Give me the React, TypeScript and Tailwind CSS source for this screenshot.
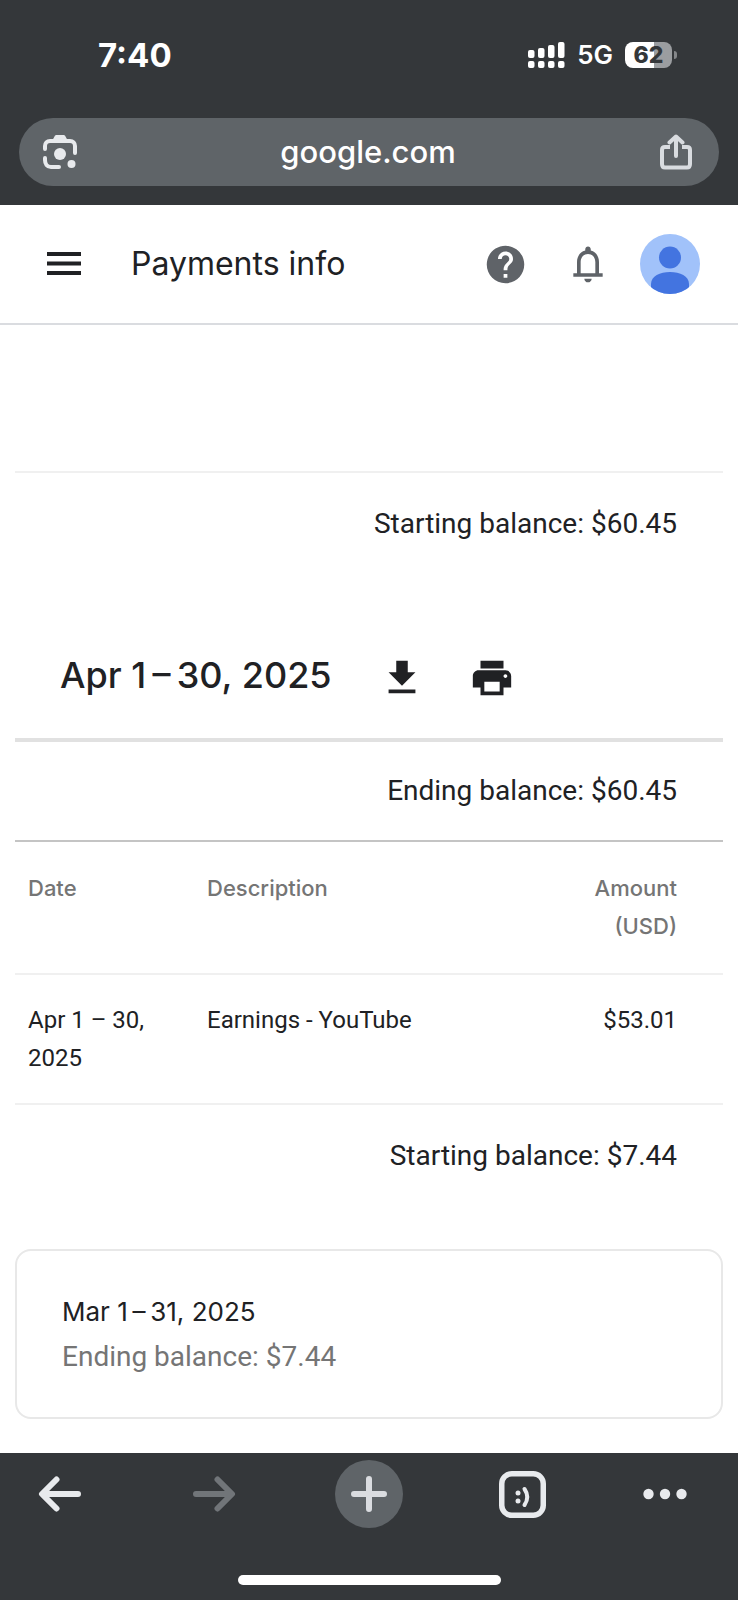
import type { ReactNode } from "react";

const TRANSACTIONS = [
  { date: "Apr 1 – 30, 2025", description: "Earnings - YouTube", amount: "$53.01" },
];

const SIGNAL_BARS = [
  { x: 0, top: 8 },
  { x: 10, top: 6 },
  { x: 20, top: 3 },
  { x: 30, top: 0 },
];

function StatusBar() {
  return (
    <div className="flex items-center justify-between pt-[35px] pb-[43px] pl-[98px] pr-[61px] text-white">
      <span className="text-[33px] leading-10 font-bold">7:40</span>
      <div className="flex items-center gap-3">
        <svg width="37" height="26" viewBox="0 0 37 26" fill="currentColor" aria-label="Signal">
          {SIGNAL_BARS.map((b) => (
            <g key={b.x}>
              <rect x={b.x} y={b.top} width="6.5" height={16 - b.top} rx="2" />
              <rect x={b.x} y="19" width="6.5" height="7" rx="2" />
            </g>
          ))}
        </svg>
        <span className="text-[26px] leading-8 font-semibold">5G</span>
        <div className="flex items-center gap-0.5">
          <div className="flex h-[26px] w-[47px] items-center justify-center rounded-lg bg-linear-to-r from-white from-62% to-[#9b9da0] to-62% text-[23px] font-extrabold text-[#34373a]">
            62
          </div>
          <span className="h-2 w-[3px] rounded-r-full bg-[#85878a]" />
        </div>
      </div>
    </div>
  );
}

function AddressBar() {
  return (
    <div className="mx-[19px] flex h-[68px] items-center justify-between rounded-full bg-[#5f6468] px-6 text-[#e8eaed]">
      <button aria-label="Search with camera">
        <svg width="34" height="34" viewBox="0 0 34 34" fill="none">
          <path d="M2 14V11C2 8 4 6 7 6H27C30 6 32 8 32 11V18" stroke="currentColor" strokeWidth="4" strokeLinecap="round" />
          <path d="M2 23V25C2 29 4 32 8 32H16" stroke="currentColor" strokeWidth="4" strokeLinecap="round" />
          <path d="M9 6L11.5 1.5C12 .5 12.500 0 13.500 0H20.500C21.500 0 22 .5 22.500 1.500L25 6Z" fill="currentColor" />
          <circle cx="17" cy="19" r="6" fill="currentColor" />
          <circle cx="28.500" cy="29" r="4" fill="currentColor" />
        </svg>
      </button>
      <span className="text-[31px] leading-10 font-medium text-white">google.com</span>
      <button aria-label="Share" className="pr-0.5 text-[#d9dce0]">
        <svg width="34" height="36" viewBox="0 0 34 36" fill="none" stroke="currentColor" strokeWidth="4">
          <path d="M11 13H6C4 13 3 14 3 16V30C3 32 4 33.500 6 33.500H28C30 33.500 31 32 31 30V16C31 14 30 13 28 13H23" strokeLinecap="butt" />
          <path d="M17 22V3M10.500 8.500L17 2.500L23.500 8.500" strokeLinecap="round" strokeLinejoin="round" />
        </svg>
      </button>
    </div>
  );
}

function AppHeader() {
  return (
    <header className="flex h-30 items-center border-b-2 border-[#dadce0] pl-[47px] pr-[38px]">
      <button aria-label="Main menu">
        <svg width="34" height="24" viewBox="0 0 34 24" fill="#202124">
          <path d="M0 0H34V4H0ZM0 9.500H34V13.500H0ZM0 19H34V23H0Z" />
        </svg>
      </button>
      <h1 className="ml-[50px] grow text-[32px] leading-10 text-[#202124]">Payments info</h1>
      <div className="flex items-center text-[#5f6368]">
        <button aria-label="Help">
          <svg width="45" height="45" viewBox="0 0 24 24" fill="currentColor">
            <path d="M12 2C6.480 2 2 6.480 2 12s4.480 10 10 10 10-4.480 10-10S17.520 2 12 2zm1 17h-2v-2h2v2zm2.070-7.750l-.9.920C13.450 12.900 13 13.500 13 15h-2v-.5c0-1.100.45-2.100 1.170-2.830l1.240-1.260c.37-.36.59-.86.59-1.410 0-1.100-.9-2-2-2s-2 .9-2 2H8c0-2.210 1.790-4 4-4s4 1.790 4 4c0 .88-.36 1.680-.93 2.250z" />
          </svg>
        </button>
        <button aria-label="Notifications" className="mr-[30px] ml-[38px]">
          <svg width="44" height="44" viewBox="0 0 24 24" fill="currentColor">
            <path d="M18 17v-6c0-3.070-1.630-5.640-4.500-6.320V4c0-.83-.67-1.500-1.500-1.500s-1.500.67-1.500 1.500v.68C7.640 5.360 6 7.920 6 11v6H4v2h16v-2h-2zm-2 0H8v-6c0-2.480 1.510-4.500 4-4.500s4 2.020 4 4.500v6zm-4 5c1.100 0 2-.9 2-2h-4c0 1.100.9 2 2 2z" />
          </svg>
        </button>
        <button aria-label="Account" className="overflow-hidden rounded-full bg-[#a1c2fa]">
          <svg width="60" height="60" viewBox="0 0 60 60" fill="#4374e0">
            <circle cx="30" cy="23.500" r="11" />
            <path d="M11 60V50C11 42 20 38 30 38S49 42 49 50V60Z" />
          </svg>
        </button>
      </div>
    </header>
  );
}

function Balance({ children }: { children: ReactNode }) {
  return <p className="pr-[46px] text-right text-[28px] leading-10">{children}</p>;
}

function TransactionTable() {
  return (
    <table className="w-full table-fixed border-t-2 border-[#c4c4c4] text-left align-top text-2xl leading-[38px]">
      <colgroup>
        <col className="w-[179px]" />
        <col />
        <col className="w-[170px]" />
      </colgroup>
      <thead>
        <tr className="border-b-2 border-[#f0f0f0] align-top font-[Inter,sans-serif] text-[22px] text-[#757575]">
          <th className="pt-[27px] pb-7 pl-[13px] font-medium">Date</th>
          <th className="pt-[27px] pb-7 pl-[13px] font-medium">Description</th>
          <th className="pt-[27px] pb-7 pr-[46px] pl-10 text-right font-medium">Amount (USD)</th>
        </tr>
      </thead>
      <tbody>
        {TRANSACTIONS.map((t) => (
          <tr key={t.description} className="border-b-2 border-[#f0f0f0] align-top">
            <td className="py-[26px] pr-8 pl-[13px]">{t.date}</td>
            <td className="py-[26px] pl-[13px]">{t.description}</td>
            <td className="py-[26px] pr-[46px] text-right">{t.amount}</td>
          </tr>
        ))}
      </tbody>
    </table>
  );
}

function Statement() {
  return (
    <section>
      <div className="flex items-center border-b-4 border-[#e1e1e1] pt-[107px] pb-[33px] pl-[45px]">
        <h2 className="pb-1.5 font-[Inter,sans-serif] text-[36px] leading-12 font-medium">Apr 1{"\u2009"}–{"\u2009"}30, 2025</h2>
        <button aria-label="Download" className="ml-[47px]">
          <svg width="46" height="46" viewBox="0 0 24 24" fill="currentColor">
            <path d="M19 9h-4V3H9v6H5l7 7 7-7zM5 18v2h14v-2H5z" />
          </svg>
        </button>
        <button aria-label="Print" className="ml-11">
          <svg width="46" height="46" viewBox="0 0 24 24" fill="currentColor">
            <path d="M19 8H5c-1.660 0-3 1.340-3 3v6h4v4h12v-4h4v-6c0-1.660-1.340-3-3-3zm-3 11H8v-5h8v5zm3-7c-.55 0-1-.45-1-1s.45-1 1-1 1 .45 1 1-.45 1-1 1zm-1-9H6v4h12V3z" />
          </svg>
        </button>
      </div>
      <div className="py-[29px]">
        <Balance>Ending balance: $60.45</Balance>
      </div>
      <TransactionTable />
      <div className="pt-[31px] pb-[73px]">
        <Balance>Starting balance: $7.44</Balance>
      </div>
    </section>
  );
}

function BottomBar() {
  return (
    <footer className="bg-[#34373a] pt-[7px] pb-[15px] text-[#e8eaed]">
      <nav className="flex items-center justify-between pr-[51px] pl-[26px]">
        <button aria-label="Back" className="flex h-[68px] w-[68px] items-center justify-center">
          <svg width="44" height="36" viewBox="0 0 44 36" fill="none" stroke="currentColor" strokeWidth="6" strokeLinecap="round" strokeLinejoin="round">
            <path d="M40 18H5M18.500 3.500L4 18L18.500 32.500" />
          </svg>
        </button>
        <button aria-label="Forward" disabled className="flex h-[68px] w-[68px] items-center justify-center text-[#717579]">
          <svg width="44" height="36" viewBox="0 0 44 36" fill="none" stroke="currentColor" strokeWidth="6" strokeLinecap="round" strokeLinejoin="round">
            <path d="M4 18H39M25.500 3.500L40 18L25.500 32.500" />
          </svg>
        </button>
        <button aria-label="New tab" className="flex h-[68px] w-[68px] items-center justify-center rounded-full bg-[#5f6468] text-[#dadce0]">
          <svg width="36" height="36" viewBox="0 0 36 36" fill="none" stroke="currentColor" strokeWidth="6" strokeLinecap="round">
            <path d="M18 3V33M3 18H33" />
          </svg>
        </button>
        <button aria-label="Tabs" className="flex h-[68px] w-[68px] items-center justify-center">
          <svg width="47" height="47" viewBox="0 0 47 47" fill="none">
            <rect x="2.750" y="2.750" width="41.500" height="41.500" rx="10" stroke="currentColor" strokeWidth="5.500" />
            <circle cx="19" cy="22" r="2.500" fill="currentColor" />
            <circle cx="19" cy="30" r="2.500" fill="currentColor" />
            <path d="M25.500 18Q31 26 25.500 34" stroke="currentColor" strokeWidth="4" strokeLinecap="round" />
          </svg>
        </button>
        <button aria-label="More" className="flex h-[68px] w-11 items-center justify-center">
          <svg width="44" height="12" viewBox="0 0 44 12" fill="currentColor">
            <circle cx="5.500" cy="6" r="5.200" />
            <circle cx="22" cy="6" r="5.200" />
            <circle cx="38.500" cy="6" r="5.200" />
          </svg>
        </button>
      </nav>
      <div className="mx-auto mt-[47px] h-2.5 w-[263px] rounded-full bg-white" />
    </footer>
  );
}

export default function App() {
  return (
    <div className="flex min-h-screen flex-col bg-white font-[Inter,sans-serif]">
      <div className="bg-[#34373a] pb-[19px]">
        <StatusBar />
        <AddressBar />
      </div>
      <AppHeader />
      <main className="grow px-[15px] pt-[146px] pb-[33px] font-[Roboto,sans-serif] text-[#202124]">
        <div className="border-t-2 border-[#f0f0f0] pt-[31px]">
          <Balance>Starting balance: $60.45</Balance>
        </div>
        <Statement />
        <section className="rounded-2xl border-2 border-[#e8e8e8] px-[45px] py-[38px] text-[28px] leading-[45px]">
          <h2 className="font-[Inter,sans-serif] text-[26px]">Mar 1{"\u2009"}–{"\u2009"}31, 2025</h2>
          <p className="text-[#757575]">Ending balance: $7.44</p>
        </section>
      </main>
      <BottomBar />
    </div>
  );
}
